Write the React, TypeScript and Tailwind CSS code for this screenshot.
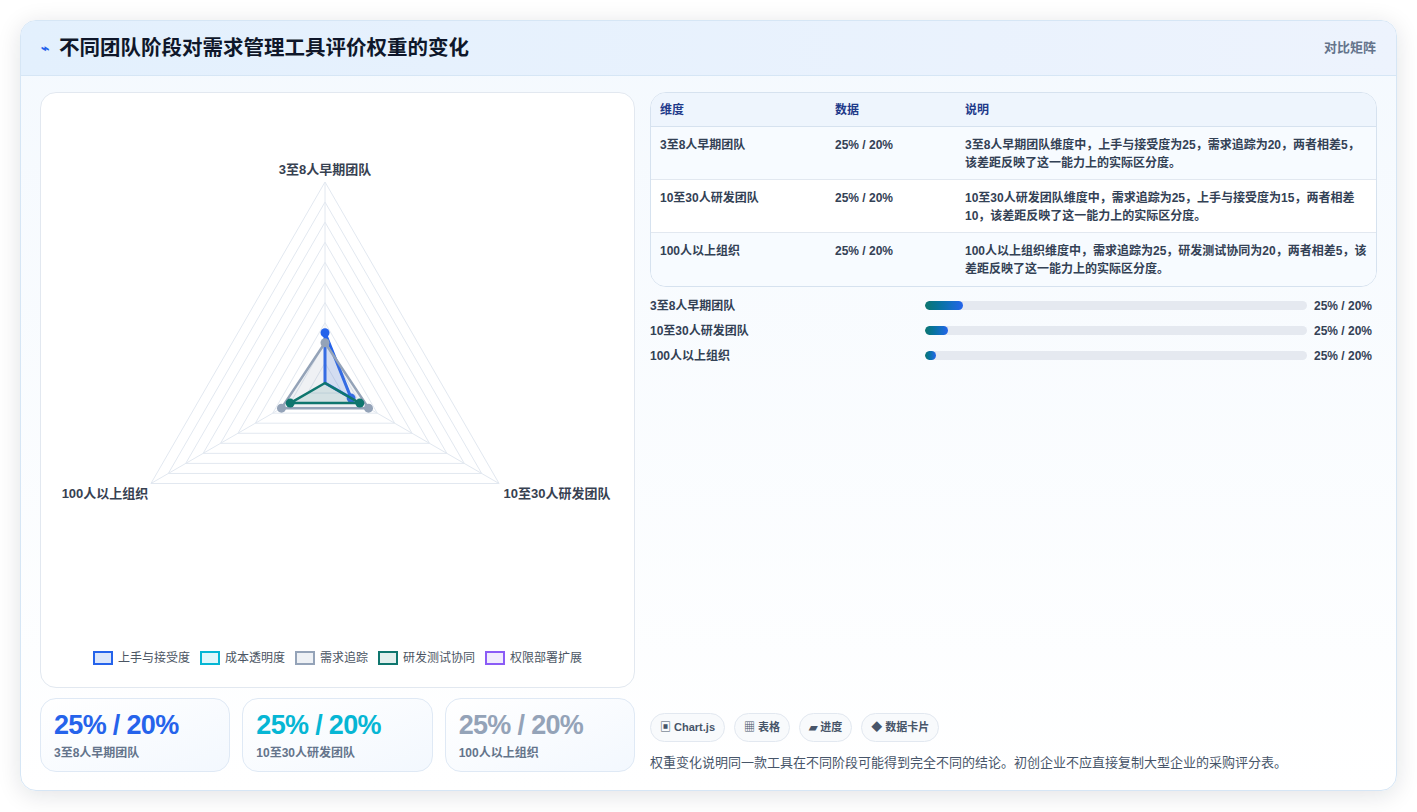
const FONT = { fontFamily: '"Liberation Sans", "Noto Sans CJK SC", sans-serif' };

const ROWS = [
  { dim: "3至8人早期团队", data: "25% / 20%", desc: "3至8人早期团队维度中，上手与接受度为25，需求追踪为20，两者相差5，该差距反映了这一能力上的实际区分度。", pct: 10 },
  { dim: "10至30人研发团队", data: "25% / 20%", desc: "10至30人研发团队维度中，需求追踪为25，上手与接受度为15，两者相差10，该差距反映了这一能力上的实际区分度。", pct: 6 },
  { dim: "100人以上组织", data: "25% / 20%", desc: "100人以上组织维度中，需求追踪为25，研发测试协同为20，两者相差5，该差距反映了这一能力上的实际区分度。", pct: 3 },
];

const CX = 284;
const CY = 268;
const R = 201;
const ANG = [-90, 30, 150].map((a) => (a * Math.PI) / 180);
const pt = (v: number, i: number) => [CX + (R * v) / 100 * Math.cos(ANG[i]), CY + (R * v) / 100 * Math.sin(ANG[i])];
const poly = (vals: number[]) => vals.map((v, i) => pt(v, i).join(",")).join(" ");

const SERIES = [
  { vals: [25, 15, 0], stroke: "#2563eb", fill: "rgba(37,99,235,0.15)", w: 3 },
  { vals: [20, 25, 25], stroke: "#94a3b8", fill: "rgba(148,163,184,0.15)", w: 2.5 },
  { vals: [0, 20, 20], stroke: "#0f766e", fill: "rgba(15,118,110,0.12)", w: 2.5 },
];

function Radar() {
  return (
    <svg width="594" height="500" viewBox="0 0 594 500">
      {Array.from({ length: 10 }, (_, k) => (
        <polygon key={k} points={poly([(k + 1) * 10, (k + 1) * 10, (k + 1) * 10])} fill="none" stroke="#e2e8f0" strokeWidth="1" />
      ))}
      {[0, 1, 2].map((i) => {
        const [x, y] = pt(100, i);
        return <line key={i} x1={CX} y1={CY} x2={x} y2={y} stroke="#e2e8f0" />;
      })}
      {SERIES.map((s, i) => (
        <g key={i}>
          <polygon points={poly(s.vals)} fill={s.fill} stroke={s.stroke} strokeWidth={s.w} strokeLinejoin="round" />
          {s.vals.map((v, j) => {
            if (v === 0) return null;
            const [x, y] = pt(v, j);
            return <circle key={j} cx={x} cy={y} r="4.5" fill={s.stroke} />;
          })}
        </g>
      ))}
      <text x={CX} y="59" textAnchor="middle" fontSize="13" fontWeight="700" fill="#374151" style={FONT}>3至8人早期团队</text>
      <text x="64" y="383" textAnchor="middle" fontSize="13" fontWeight="700" fill="#374151" style={FONT}>100人以上组织</text>
      <text x="516" y="383" textAnchor="middle" fontSize="13" fontWeight="700" fill="#374151" style={FONT}>10至30人研发团队</text>
    </svg>
  );
}

const LEGEND = [
  { label: "上手与接受度", cls: "border-[#2563eb] bg-[#dbe6fb]" },
  { label: "成本透明度", cls: "border-[#06b6d4] bg-[#e0f7fb]" },
  { label: "需求追踪", cls: "border-[#94a3b8] bg-[#eef1f5]" },
  { label: "研发测试协同", cls: "border-[#0f766e] bg-[#e1efed]" },
  { label: "权限部署扩展", cls: "border-[#8b5cf6] bg-[#f1ecfd]" },
];

const STATS = [
  { label: "3至8人早期团队", cls: "text-[#2563eb]" },
  { label: "10至30人研发团队", cls: "text-[#06b6d4]" },
  { label: "100人以上组织", cls: "text-[#94a3b8]" },
];

export default function App() {
  return (
    <div className="min-h-screen w-[1417px] h-[812px] bg-white p-5" style={FONT}>
      <div className="h-[771px] rounded-2xl border border-[#d6e6f5] bg-gradient-to-b from-[#f4f9fe] to-white shadow-[0_4px_24px_rgba(15,23,42,0.12)] overflow-hidden flex flex-col">
        <div className="h-[55px] flex items-center justify-between px-5 bg-gradient-to-r from-[#e3f0fd] to-[#edf3fd] border-b border-[#d6e6f5]">
          <div className="flex items-center gap-[10px]">
            <span className="text-[#2563eb] text-sm font-bold">⌁</span>
            <h1 className="text-[20.5px] font-bold text-[#0f172a]">不同团队阶段对需求管理工具评价权重的变化</h1>
          </div>
          <span className="text-[13px] font-semibold text-[#64748b]">对比矩阵</span>
        </div>
        <div className="flex-1 flex gap-[15px] px-[19px] pt-[16px] pb-[18px]">
          <div className="w-[595px] flex flex-col gap-[10px]">
            <div className="h-[596px] rounded-2xl border border-[#e2e8f0] bg-white flex flex-col items-center">
              <div className="pt-[22px]"><Radar /></div>
              <div className="mt-auto mb-[20px] flex items-center gap-[10px] text-[12px] text-[#4b5563]">
                {LEGEND.map((l) => (
                  <div key={l.label} className="flex items-center gap-[5px]">
                    <span className={`w-[20px] h-[14px] border-2 ${l.cls}`} />
                    {l.label}
                  </div>
                ))}
              </div>
            </div>
            <div className="flex gap-[12px]">
              {STATS.map((s) => (
                <div key={s.label} className="flex-1 h-[74px] rounded-2xl border border-[#dfe9f5] bg-gradient-to-br from-white to-[#f3f8fe] px-[13px] pt-[10px]">
                  <div className={`text-[27px] font-bold leading-[32px] tracking-tight ${s.cls}`}>25% / 20%</div>
                  <div className="text-[12px] font-semibold text-[#64748b] mt-[3px]">{s.label}</div>
                </div>
              ))}
            </div>
          </div>
          <div className="flex-1 flex flex-col">
            <div className="rounded-2xl border border-[#d6e2ef] overflow-hidden bg-white text-[12px] font-semibold text-[#334155]">
              <div className="flex h-[34px] items-center bg-[#eef5fd] text-[#1e3a8a] border-b border-[#d6e2ef]">
                <div className="w-[184px] pl-[9px]">维度</div>
                <div className="w-[130px]">数据</div>
                <div className="flex-1">说明</div>
              </div>
              {ROWS.map((r, i) => (
                <div key={r.dim} className={`flex h-[53px] pt-[9px] ${i % 2 === 0 ? "bg-[#f7fbff]" : "bg-white"} ${i < 2 ? "border-b border-[#e2e8f0]" : ""}`}>
                  <div className="w-[184px] pl-[9px]">{r.dim}</div>
                  <div className="w-[130px]">{r.data}</div>
                  <div className="flex-1 pr-[8px] leading-[18px]">{r.desc}</div>
                </div>
              ))}
            </div>
            <div className="mt-[10px] flex flex-col gap-[8px] text-[12px] font-semibold text-[#334155]">
              {ROWS.map((r) => (
                <div key={r.dim} className="flex items-center h-[17px]">
                  <div className="w-[275px]">{r.dim}</div>
                  <div className="w-[382px] h-[9px] rounded-full bg-[#e5e9f0] overflow-hidden">
                    <div className="h-full rounded-full bg-gradient-to-r from-[#0f766e] to-[#2563eb]" style={{ width: `${r.pct}%` }} />
                  </div>
                  <div className="ml-auto pr-[5px]">{r.data}</div>
                </div>
              ))}
            </div>
            <div className="mt-auto">
              <div className="flex gap-[9px] text-[11px] font-semibold text-[#475569]">
                {["▣ Chart.js", "▦ 表格", "▰ 进度", "◆ 数据卡片"].map((c) => (
                  <span key={c} className="h-[29px] px-[9px] flex items-center rounded-full border border-[#e2e8f0] bg-[#f8fafc]">{c}</span>
                ))}
              </div>
              <p className="mt-[11px] text-[13px] text-[#475569]">权重变化说明同一款工具在不同阶段可能得到完全不同的结论。初创企业不应直接复制大型企业的采购评分表。</p>
            </div>
          </div>
        </div>
      </div>
    </div>
  );
}
